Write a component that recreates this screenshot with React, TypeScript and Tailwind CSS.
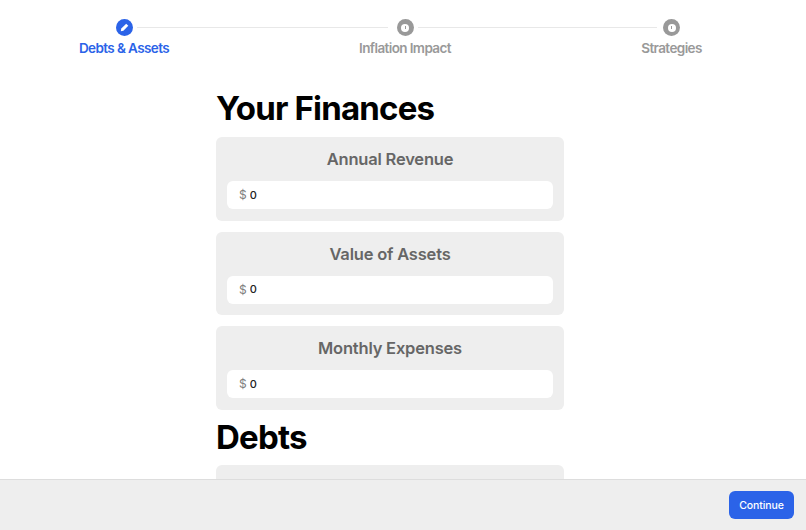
const sections = ["Annual Revenue", "Value of Assets", "Monthly Expenses"];

function Field({ label }: { label: string }) {
  return (
    <div className="h-[83.5px] rounded-md bg-[#eeeeee] px-[11px] pt-[12px]">
      <h2 className="text-center text-[16.5px] leading-[20px] font-semibold tracking-[-0.2px] text-[#666666]">
        {label}
      </h2>
      <div className="mt-[12px] flex h-[28px] items-center rounded-md bg-white pl-[12px]">
        <span className="text-[12px] text-[#808080]">$</span>
        <input
          readOnly
          value="0"
          className="ml-[3px] w-full bg-transparent text-[11px] font-medium text-[#222222] outline-none"
        />
      </div>
    </div>
  );
}

function Ring() {
  return (
    <div className="flex h-[17px] w-[17px] items-center justify-center rounded-full bg-[#999999]">
      <div className="flex h-[8px] w-[8px] items-center justify-center rounded-full bg-white">
        <div className="h-[3px] w-[1px] bg-[#999999]" />
      </div>
    </div>
  );
}

export default function App() {
  return (
    <div className="h-screen overflow-hidden bg-white font-['Inter',sans-serif]">
      {/* Stepper */}
      <div className="flex pt-[19px] pl-[79px]">
        <div className="flex w-[90px] shrink-0 flex-col items-center">
          <div className="flex h-[17px] w-[17px] items-center justify-center rounded-full bg-[#2b63e8]">
            <svg viewBox="0 0 17 17" className="h-[17px] w-[17px]">
              <path d="M4.8 12.2 L5.3 9.6 L10.2 4.7 L12.3 6.8 L7.4 11.7 Z" fill="white" />
            </svg>
          </div>
          <span className="mt-[4px] text-[13.5px] leading-[17px] font-semibold tracking-[-0.6px] whitespace-nowrap text-[#2b63e8]">
            Debts &amp; Assets
          </span>
        </div>
        <div className="mt-[8px] -mr-[29px] -ml-[32px] h-px w-[251px] bg-[#e8e8e8]" />
        <div className="flex w-[92px] shrink-0 flex-col items-center">
          <Ring />
          <span className="mt-[4px] text-[13.5px] leading-[17px] font-semibold tracking-[-0.6px] whitespace-nowrap text-[#999999]">
            Inflation Impact
          </span>
        </div>
        <div className="mt-[8px] -mr-[16px] -ml-[33px] h-px w-[239px] bg-[#e8e8e8]" />
        <div className="flex w-[61px] shrink-0 flex-col items-center">
          <Ring />
          <span className="mt-[4px] text-[13.5px] leading-[17px] font-semibold tracking-[-0.6px] whitespace-nowrap text-[#999999]">
            Strategies
          </span>
        </div>
      </div>

      {/* Form */}
      <div className="mt-[31px] ml-[216px] w-[348px]">
        <h1 className="text-[33px] leading-[41px] font-bold tracking-[-0.8px] text-black">
          Your Finances
        </h1>
        <div className="mt-[8px] flex flex-col gap-[11px]">
          {sections.map((label) => (
            <Field key={label} label={label} />
          ))}
        </div>
        <h1 className="mt-[7px] text-[33px] leading-[41px] font-bold tracking-[-0.8px] text-black">
          Debts
        </h1>
        <div className="mt-[7px]">
          <Field label="Credit Cards" />
        </div>
      </div>

      {/* Footer */}
      <div className="fixed right-0 bottom-0 left-0 flex h-[51px] items-center justify-end border-t border-[#dddddd] bg-[#eeeeee] pr-[12px]">
        <button className="h-[28px] w-[65px] rounded-md bg-[#2b63e8] pt-px text-[10.5px] font-medium tracking-[-0.1px] text-white">
          Continue
        </button>
      </div>
    </div>
  );
}
